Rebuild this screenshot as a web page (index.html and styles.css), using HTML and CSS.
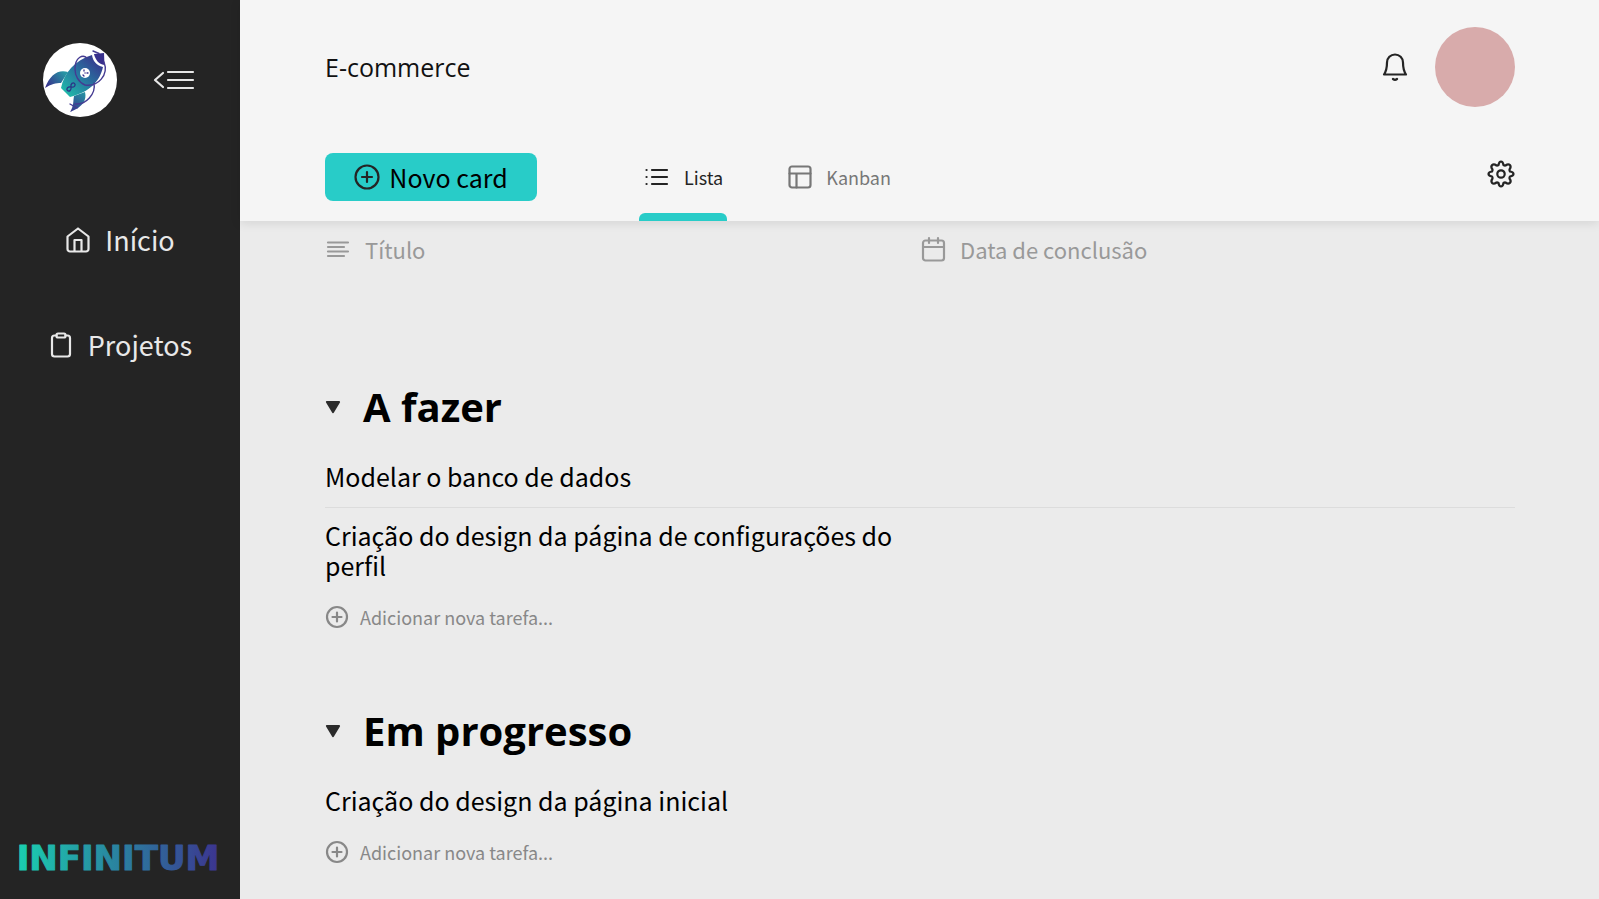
FILE: index.html
```html
<!DOCTYPE html>
<html lang="pt-BR">
<head>
<meta charset="utf-8">
<title>E-commerce</title>
<link rel="stylesheet" href="styles.css">
</head>
<body>
<div class="app">
  <aside class="sidebar">
    <div class="sidebar-top">
      <svg class="logo" viewBox="0 0 74 74" role="img" aria-label="Infinitum">
        <defs>
          <linearGradient id="body" x1="20" y1="52" x2="56" y2="14" gradientUnits="userSpaceOnUse"><stop offset="0" stop-color="#1fc0aa"/><stop offset=".5" stop-color="#2876a0"/><stop offset="1" stop-color="#38308c"/></linearGradient>
          <linearGradient id="wing" x1="22" y1="30" x2="4" y2="44" gradientUnits="userSpaceOnUse"><stop offset="0" stop-color="#2696a4"/><stop offset="1" stop-color="#38308c"/></linearGradient>
          <linearGradient id="tail" x1="40" y1="48" x2="28" y2="70" gradientUnits="userSpaceOnUse"><stop offset="0" stop-color="#2696a4"/><stop offset="1" stop-color="#38308c"/></linearGradient>
        </defs>
        <circle cx="37" cy="37" r="37" fill="#fff"/>
        <path d="M25 29C15 26 7 32 2 45c6-4 11-5 16-5z" fill="url(#wing)"/>
        <path d="M42 49c2 8-2 15-15 20 4-6 3-11 4-16z" fill="url(#tail)"/>
        <path d="M18 45C21 30 32 17 49 12c1 6 4 10 11 12-3 14-13 25-33 30z" fill="url(#body)"/>
        <path d="M51 11l10-1 .5 12c-6-1-9-5-10.500-11z" fill="#38308c"/>
        <path d="M50 8l6 2.500M42 42c-7-3-10-10-10-16 0-12 8-15 12-11M61 19c5 13-6 25-19 23M51 40c2 11-8 22-19 21M27 61l7 4" fill="none" stroke="#453b92" stroke-width="1.400" stroke-linecap="round"/>
        <circle cx="42" cy="30" r="5" fill="#fff"/>
        <path d="M41 27v1M40 32l1 1M44 30h1M42 30h.1" stroke="#38308c" stroke-width="1.300"/>
        <g transform="rotate(-45 28 44)"><path d="M28 44c-2-3-5-2-5 0s3 3 5 0 5-2 5 0-3 3-5 0z" fill="none" stroke="#2b3587" stroke-width="1.300"/></g>
      </svg>
      <button class="icon-button" aria-label="Recolher menu">
        <svg width="42" height="22" viewBox="0 0 42 22"><path d="M10 4L2 11l8 7M15 3h25M15 11h25M15 19h25"/></svg>
      </button>
    </div>
    <nav class="side-nav">
      <a href="#"><svg width="26" height="26" viewBox="0 0 26 26"><path d="M2.500 9.500L13 1.500l10.500 8V22a2.500 2.500 0 0 1-2.500 2.500H5A2.500 2.500 0 0 1 2.500 22zM9.500 24.500V13h7v11.500"/></svg>Início</a>
      <a href="#"><svg width="26" height="26" viewBox="0 0 26 26"><path d="M8.500 3.500h-2A2.500 2.500 0 0 0 4 6v16a2.500 2.500 0 0 0 2.500 2.500h13A2.500 2.500 0 0 0 22 22V6a2.500 2.500 0 0 0-2.500-2.500h-2"/><rect x="8.500" y="1.500" width="9" height="4" rx="1.500"/></svg>Projetos</a>
    </nav>
    <svg class="wordmark" viewBox="0 0 204 40" role="img" aria-label="INFINITUM">
      <defs><linearGradient id="brand" x1="0" y1="0" x2="204" y2="0" gradientUnits="userSpaceOnUse"><stop offset="0" stop-color="#1ad1b0"/><stop offset=".5" stop-color="#2a82a0"/><stop offset="1" stop-color="#3c338f"/></linearGradient></defs>
      <text x="102" y="32" text-anchor="middle" fill="url(#brand)" stroke="url(#brand)">INFINITUM</text>
    </svg>
  </aside>
  <div class="main">
    <header class="header">
      <div class="title-row">
        <h1>E-commerce</h1>
        <div class="user">
          <button class="icon-button" aria-label="Notificações"><svg width="26" height="28" viewBox="0 0 26 28"><path d="M2 21.500c2-3 3-6 3-12a8 8 0 0 1 16 0c0 6 1 9 3 12z"/><path d="M11 26q2 1.500 4 0"/></svg></button>
          <button class="avatar" aria-label="Perfil"></button>
        </div>
      </div>
      <div class="tool-row">
        <button class="new-card"><svg width="26" height="26" viewBox="0 0 26 26"><circle cx="13" cy="13" r="11.500"/><path d="M13 8v10M8 13h10"/></svg>Novo card</button>
        <nav class="tabs">
          <a class="tab active" href="#"><svg width="26" height="24" viewBox="0 0 26 24"><path d="M8 5h15M8 12h15M8 19h15M2.500 5h.1M2.500 12h.1M2.500 19h.1"/></svg>Lista</a>
          <a class="tab" href="#"><svg width="24" height="24" viewBox="0 0 24 24"><rect x="1.500" y="1.500" width="21" height="21" rx="2.500"/><path d="M1.500 8.500h21M8.500 8.500v14"/></svg>Kanban</a>
        </nav>
        <button class="icon-button settings" aria-label="Configurações"><svg width="28" height="28" viewBox="0 0 28 28"><path d="M11.500 5C12 2.300 12.500 1.500 14 1.500S16 2.300 16.500 5q1 .700 2 .500C20.500 4 21.800 3.900 22.900 5.100S24 7.500 22.500 9.500q-.200 1 .5 2c2.700.500 3.500 1 3.500 2.500s-.800 2-3.500 2.500q-.700 1-.5 2c1.500 2 1.600 3.300.4 4.400s-2.400 1.100-4.400-.4q-1-.200-2 .5c-.5 2.700-1 3.500-2.500 3.500s-2-.800-2.500-3.500q-1-.700-2-.5c-2 1.500-3.300 1.600-4.400.4S4 20.500 5.500 18.500q.2-1-.5-2C2.300 16 1.500 15.500 1.500 14S2.300 12 5 11.500q.7-1 .5-2C4 7.500 3.900 6.200 5.100 5.100S7.500 4 9.500 5.500q1 .2 2-.5z"/><circle cx="14" cy="14" r="3.700"/></svg></button>
      </div>
    </header>
    <main class="content">
      <div class="columns">
        <div><svg width="26" height="26" viewBox="0 0 26 26"><path d="M3 6.500h20M3 11h16M3 15.500h20M3 20h16"/></svg>Título</div>
        <div><svg width="26" height="26" viewBox="0 0 26 26"><rect x="3" y="4.500" width="21" height="20" rx="2.500"/><path d="M3 11h21M9 2v5M18 2v5"/></svg>Data de conclusão</div>
      </div>
      <section class="group">
        <h2><svg width="16" height="14" viewBox="0 0 16 14"><path d="M2 2h12L8 12z"/></svg>A fazer</h2>
        <ul><li><span>Modelar o banco de dados</span></li><li><span>Criação do design da página de configurações do perfil</span></li></ul>
        <button class="add-task"><svg width="24" height="24" viewBox="0 0 24 24"><circle cx="12" cy="12" r="10"/><path d="M12 7.500v9M7.500 12h9"/></svg>Adicionar nova tarefa...</button>
      </section>
      <section class="group">
        <h2><svg width="16" height="14" viewBox="0 0 16 14"><path d="M2 2h12L8 12z"/></svg>Em progresso</h2>
        <ul><li><span>Criação do design da página inicial</span></li></ul>
        <button class="add-task"><svg width="24" height="24" viewBox="0 0 24 24"><circle cx="12" cy="12" r="10"/><path d="M12 7.500v9M7.500 12h9"/></svg>Adicionar nova tarefa...</button>
      </section>
    </main>
  </div>
</div>
</body>
</html>
```
FILE: styles.css
```css
* { box-sizing: border-box; }
body { margin: 0; font-family: "Noto Sans CJK JP", sans-serif; color: #000; background: #ebebeb; }
button { font: inherit; color: inherit; border: 0; padding: 0; background: none; cursor: pointer; }
a { color: inherit; text-decoration: none; }
ul { list-style: none; margin: 0; padding: 0; }
svg { display: block; flex: none; fill: none; stroke: currentColor; stroke-width: 2.2; stroke-linecap: round; stroke-linejoin: round; }
.app { display: flex; min-height: 100vh; }
.sidebar { flex: none; width: 240px; height: 100vh; position: sticky; top: 0; display: flex; flex-direction: column; background: #242424; color: #e8e8e8; }
.sidebar-top { display: flex; align-items: center; gap: 36px; padding: 43px 0 0 43px; }
.logo { width: 74px; height: 74px; stroke: none; }
.side-nav { display: flex; flex-direction: column; align-items: center; gap: 65px; padding-top: 103px; }
.side-nav a { display: flex; align-items: center; gap: 14px; font-size: 27px; line-height: 40px; }
.wordmark { width: 204px; margin: auto 0 21px 16px; }
.wordmark text { font: 700 34px "DejaVu Sans", sans-serif; stroke-width: 1; }
.main { flex: 1; min-width: 0; }
.header { position: relative; background: #f5f5f5; box-shadow: 0 2px 10px rgba(0, 0, 0, .1); padding: 27px 84px 0 85px; color: #242424; }
.title-row, .user, .tool-row, .tabs, .tab { display: flex; align-items: center; }
.title-row { justify-content: space-between; }
h1 { margin: 0; font: 400 25px/32px "Open Sans", sans-serif; color: #111; }
.user { gap: 27px; }
.avatar { width: 80px; height: 80px; border-radius: 50%; background: #d8abab; }
.tool-row { margin-top: 46px; align-items: flex-start; }
.new-card { width: 212px; height: 48px; display: flex; align-items: center; justify-content: center; gap: 9px; border-radius: 8px; background: #28ccc8; color: #000; font-size: 25px; line-height: 32px; }
.new-card svg { color: #242424; }
.tabs { margin-left: 102px; gap: 56px; }
.tab { position: relative; height: 68px; padding: 0 4px 20px 5px; gap: 14px; font-size: 18px; line-height: 24px; color: #777; }
.tab.active { color: #242424; }
.tab.active::after { content: ""; position: absolute; left: 0; right: 0; bottom: 0; height: 8px; border-radius: 6px 6px 0 0; background: #28ccc8; }
.settings { margin: 7px 0 0 auto; }
.content { padding: 10px 84px 0 85px; }
.columns { display: grid; grid-template-columns: 1fr 1fr; color: #999; font-size: 22px; line-height: 36px; }
.columns div { display: flex; align-items: center; gap: 14px; }
.group { padding-top: 110px; }
.group + .group { padding-top: 72px; }
h2 { display: flex; align-items: center; gap: 22px; margin: 0 0 12px; font: 700 40px/60px "Open Sans", sans-serif; }
h2 svg { color: #2b2b2b; fill: currentColor; }
li { padding: 12px 0 16px; font-size: 25px; line-height: 30px; }
li + li { border-top: 1px solid #dcdcdc; }
li span { display: block; width: 50%; }
.add-task { display: flex; align-items: center; gap: 11px; margin-top: 9px; color: #888; font-size: 18px; line-height: 24px; }
```
